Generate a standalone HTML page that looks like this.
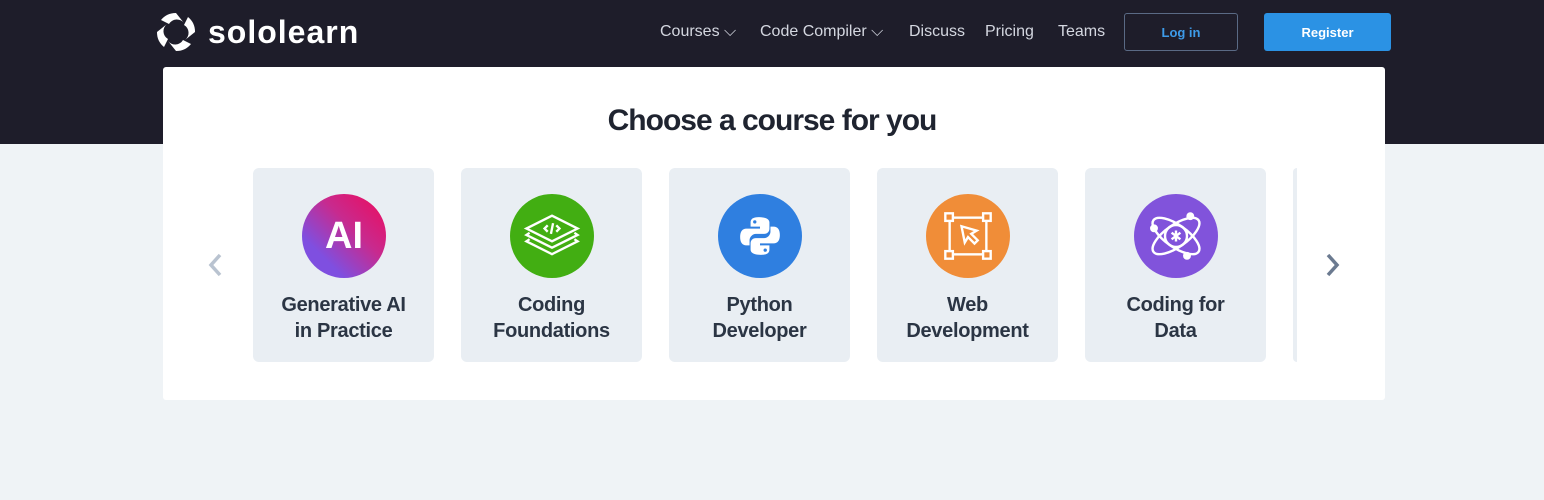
<!DOCTYPE html>
<html><head><meta charset="utf-8"><style>
*{margin:0;padding:0;box-sizing:border-box}
body{width:1544px;height:500px;background:#eff3f6;font-family:"Liberation Sans",sans-serif;position:relative;overflow:hidden}
.top{position:absolute;left:0;top:0;width:1544px;height:144px;background:#1e1d2a}
.logo{position:absolute;left:156px;top:12px;display:flex;align-items:center;color:#fff;font-size:32px;font-weight:bold;letter-spacing:1px}
.logo span{margin-left:12px}
.nav{position:absolute;top:23px;font-size:16px;color:#d4d7e0}
.btn{position:absolute;top:13px;height:38px;border-radius:3px;font-size:13px;font-weight:bold;display:flex;align-items:center;justify-content:center}
.panel{position:absolute;left:163px;top:67px;width:1222px;height:333px;background:#fff;border-radius:3px;overflow:hidden}
h1{position:absolute;top:104px;left:0;width:1544px;text-align:center;font-size:30px;color:#1f2430;letter-spacing:-1px}
.card{position:absolute;top:168px;width:181px;height:194px;background:#e9eef3;border-radius:6px}
.circ{position:absolute;left:49px;top:26px;width:84px;height:84px;border-radius:50%;display:flex;align-items:center;justify-content:center}
.t{position:absolute;top:124px;left:0;width:100%;text-align:center;font-size:20px;font-weight:bold;color:#2b3544;line-height:26px;letter-spacing:-0.3px}
.arr{position:absolute;top:252px}
</style></head><body>
<div class="top"></div>
<div class="logo"><svg width="40" height="40" viewBox="0 0 40 40"><g fill="#fff"><path d="M20 1a19 19 0 0 0-15 7l8 4a9 9 0 0 1 15-1z"/><path d="M39 20a19 19 0 0 0-7-15l-4 8a9 9 0 0 1 1 15z"/><path d="M20 39a19 19 0 0 0 15-7l-8-4a9 9 0 0 1-15 1z"/><path d="M1 20a19 19 0 0 0 7 15l4-8a9 9 0 0 1-1-15z"/></g></svg><span>sololearn</span></div>
<div class="nav" style="left:660px">Courses ⌵</div>
<div class="nav" style="left:760px">Code Compiler ⌵</div>
<div class="nav" style="left:909px">Discuss</div>
<div class="nav" style="left:985px">Pricing</div>
<div class="nav" style="left:1058px">Teams</div>
<div class="btn" style="left:1124px;width:114px;border:1px solid #5a6a85;color:#3d9be9">Log in</div>
<div class="btn" style="left:1264px;width:127px;background:#2b92e4;color:#fff">Register</div>
<div class="panel"></div>
<h1>Choose a course for you</h1>
<svg class="arr" style="left:206px" width="18" height="26" viewBox="0 0 18 26"><path d="M14 3L5 13l9 10" stroke="#b9c3d0" stroke-width="3.5" fill="none"/></svg>
<svg class="arr" style="left:1324px" width="18" height="26" viewBox="0 0 18 26"><path d="M4 3l9 10-9 10" stroke="#6b7a90" stroke-width="3.5" fill="none"/></svg>
<div class="card" style="left:253px"><div class="circ" style="background:linear-gradient(45deg,#7f4fe0 25%,#c82a8e 60%,#ef0a5a)"><span style="color:#fff;font-size:38px;font-weight:bold">AI</span></div><div class="t">Generative AI<br>in Practice</div></div>
<div class="card" style="left:461px"><div class="circ" style="background:#42ae12"><svg width="64" height="54" viewBox="0 0 60 50" fill="none" stroke="#fff" stroke-width="2.2"><path d="M30 6L54 18 30 30 6 18z"/><path d="M9 22L6 24 30 36 54 24 51 22"/><path d="M9 28L6 30 30 42 54 30 51 28"/><path d="M26 15l-3 3 3 3M34 15l3 3-3 3M31 13l-2 10"/></svg></div><div class="t">Coding<br>Foundations</div></div>
<div class="card" style="left:669px"><div class="circ" style="background:#2f7fe0"><svg width="46" height="46" viewBox="0 0 44 44" fill="#fff"><path d="M21 4c-6 0-8 2-8 5v4h9v2H9c-4 0-6 3-6 8s2 8 6 8h3v-5c0-3 3-6 6-6h8c3 0 5-2 5-5V9c0-3-3-5-10-5z"/><path d="M23 40c6 0 8-2 8-5v-4h-9v-2h13c4 0 6-3 6-8s-2-8-6-8h-3v5c0 3-3 6-6 6h-8c-3 0-5 2-5 5v6c0 3 3 5 10 5z"/><circle cx="17" cy="8.5" r="1.6" fill="#2f7fe0"/><circle cx="27" cy="35.5" r="1.6" fill="#2f7fe0"/></svg></div><div class="t">Python<br>Developer</div></div>
<div class="card" style="left:877px"><div class="circ" style="background:#f08d38"><svg width="54" height="54" viewBox="0 0 50 50" fill="none" stroke="#fff" stroke-width="2.2"><rect x="8" y="8" width="34" height="34"/><rect x="4" y="4" width="7" height="7" fill="#f08d38"/><rect x="39" y="4" width="7" height="7" fill="#f08d38"/><rect x="4" y="39" width="7" height="7" fill="#f08d38"/><rect x="39" y="39" width="7" height="7" fill="#f08d38"/><path d="M19 16l3 15 3-5 6 6 3-3-6-6 5-3z"/></svg></div><div class="t">Web<br>Development</div></div>
<div class="card" style="left:1085px"><div class="circ" style="background:#8153db"><svg width="66" height="66" viewBox="0 0 60 60" fill="none" stroke="#fff" stroke-width="2.2"><ellipse cx="30" cy="30" rx="25" ry="10" transform="rotate(35 30 30)"/><ellipse cx="30" cy="30" rx="25" ry="10" transform="rotate(-35 30 30)"/><circle cx="30" cy="30" r="10"/><path d="M30 25v10M26 27l8 6M34 27l-8 6"/><circle cx="43" cy="12" r="2.5" fill="#fff"/><circle cx="10" cy="23" r="2.5" fill="#fff"/><circle cx="40" cy="48" r="2.5" fill="#fff"/></svg></div><div class="t">Coding for<br>Data</div></div>
<div class="card" style="left:1293px;width:4px;border-radius:6px 0 0 6px"></div>
</body></html>
